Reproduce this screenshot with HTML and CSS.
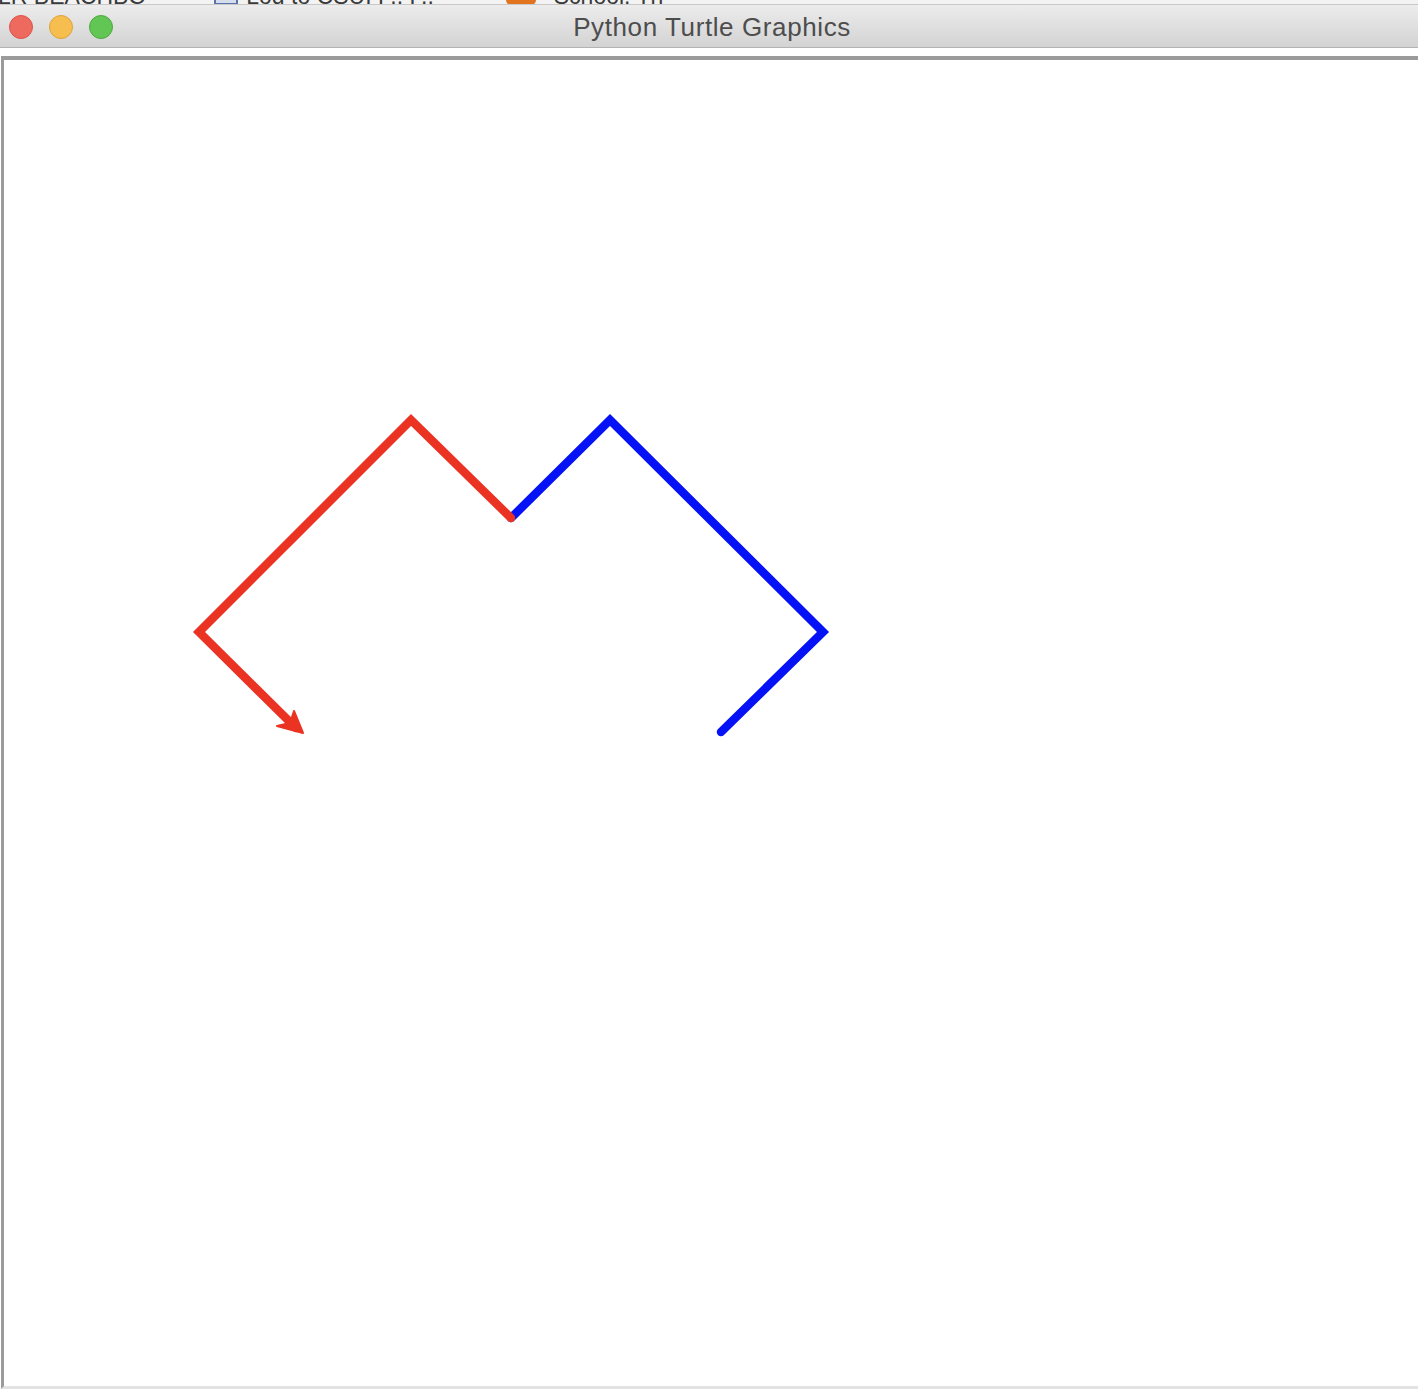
FILE: index.html
```html
<!DOCTYPE html>
<html>
<head>
<meta charset="utf-8">
<title>Python Turtle Graphics</title>
<link rel="stylesheet" href="styles.css">
</head>
<body>
<div class="bookmarks">
  <span class="bm bm-1">LR BEACHBO</span>
  <span class="bm-icon bm-icon-doc"></span>
  <span class="bm bm-2">Log to CSUI P.. F..</span>
  <span class="bm-icon bm-icon-orange"></span>
  <span class="bm bm-3">School: Th</span>
</div>
<div class="titlebar">
  <div class="lights">
    <span class="light red"></span>
    <span class="light yellow"></span>
    <span class="light green"></span>
  </div>
  <div class="title">Python Turtle Graphics</div>
  <div class="spacer"></div>
</div>
<div class="canvas">
  <svg class="drawing" width="1414" height="1326" viewBox="4 61 1414 1326" xmlns="http://www.w3.org/2000/svg">
    <polyline points="511,519 610,421 823,633 721,733" fill="none" stroke="#0512f5" stroke-width="8.5" stroke-linecap="round" stroke-linejoin="miter"/>
    <polyline points="511,519 411,421 199,633 296,729" fill="none" stroke="#ea3323" stroke-width="8.5" stroke-linecap="round" stroke-linejoin="miter"/>
    <polygon points="303,734 277,727 290,724 294,712" fill="#ea3323" stroke="#ea3323" stroke-width="2" stroke-linejoin="round"/>
  </svg>
</div>
</body>
</html>
```
FILE: styles.css
```css
html, body {
  margin: 0;
  padding: 0;
  background: #ffffff;
}
body {
  width: 1418px;
  font-family: "Liberation Sans", "Open Sans", Arial, sans-serif;
}
.bookmarks {
  height: 4px;
  overflow: hidden;
  background: #f3f3f3;
  border-bottom: 1px solid #c8c8c8;
  display: flex;
  align-items: flex-start;
  white-space: nowrap;
}
.bm {
  font-size: 23px;
  line-height: 23px;
  margin-top: -15px;
  color: #3a3a3a;
}
.bm-1 { margin-left: -2px; }
.bm-2 { margin-left: 8px; }
.bm-3 { margin-left: 18px; }
.bm-icon {
  display: inline-block;
  width: 24px;
  height: 20px;
  margin-top: -15px;
}
.bm-icon-doc {
  margin-left: 68px;
  border: 2px solid #5a73a8;
  box-sizing: border-box;
  background: #d6deee;
}
.bm-icon-orange {
  margin-left: 72px;
  border-radius: 5px;
  background: #e2731f;
  width: 30px;
}
.titlebar {
  height: 43px;
  box-sizing: border-box;
  background: linear-gradient(#ececec, #d3d3d3);
  border-bottom: 1px solid #b3b3b3;
  display: grid;
  grid-template-columns: 1fr auto 1fr;
  align-items: center;
}
.lights {
  display: flex;
  gap: 16px;
  padding-left: 9px;
  padding-top: 1px;
}
.light {
  width: 24px;
  height: 24px;
  border-radius: 50%;
  box-sizing: border-box;
}
.red { background: #ee6a5f; border: 1px solid #d9534a; }
.yellow { background: #f6be4f; border: 1px solid #dea236; }
.green { background: #62c655; border: 1px solid #4ea83f; }
.title {
  font-size: 26px;
  letter-spacing: 0.6px;
  color: #4d4d4d;
  padding-top: 3px;
  padding-left: 6px;
}
.canvas {
  margin-top: 8px;
  margin-left: 1px;
  border-top: 4px solid #9b9b9b;
  border-left: 3px solid #9b9b9b;
  border-bottom: 3px solid #e3e3e3;
  height: 1326px;
  background: #ffffff;
}
.drawing {
  display: block;
}
```
